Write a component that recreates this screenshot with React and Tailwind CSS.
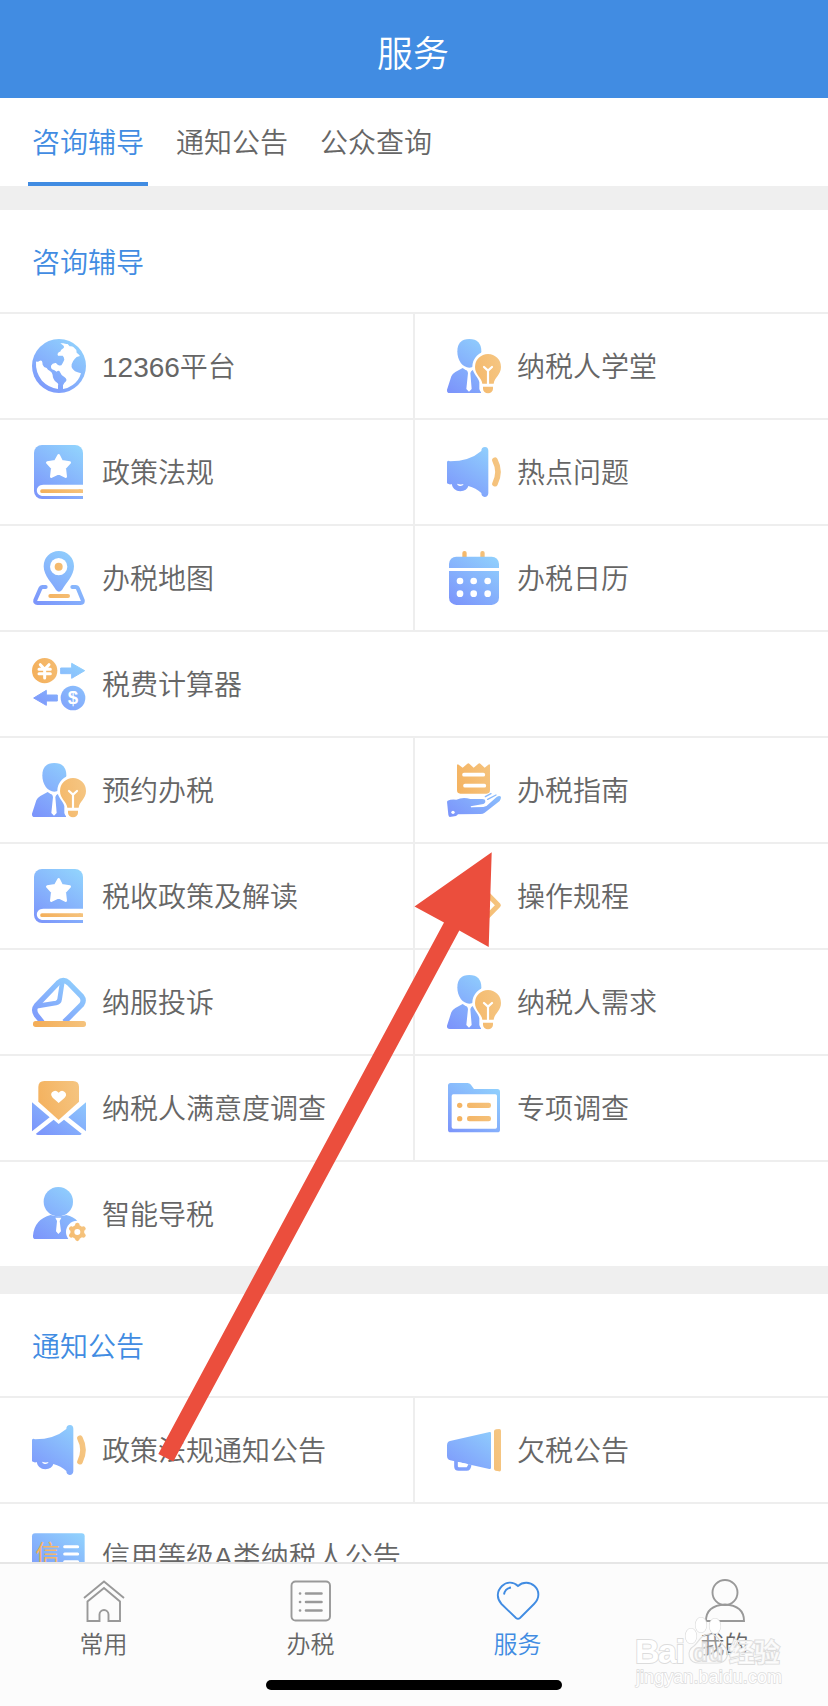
import clsx from "clsx";

const BLUE = "url(#blue)";
const ORANGE = "url(#orange)";

function Globe() {
  return (
    <>
      <circle cx="81" cy="81" r="81" fill={BLUE} />
      <path
        fill="#fff"
        d="M12 69 L15 67 Q18 71 20 67 L24 65 Q31 64 31 70 L32 77 Q35 86 44 87 Q47 93 54 96 Q61 101 62 108 Q62 116 65 120 Q68 128 77 133 Q80 136 78 140 L78 150 Q50 146 30 125 Q10 100 12 69Z"
      />
      <path
        fill="#fff"
        d="M85 13 L94 13 Q101 16 107 15 L113 22 Q120 20 125 25 Q134 31 134 41 Q140 45 144 51 Q132 53 128 60 Q122 66 119 76 Q117 84 122 90 L129 97 Q136 100 147 103 Q141 125 122 138 Q108 148 93 150 L93 139 Q96 132 102 127 Q106 121 98 115 L89 108 Q84 99 82 96 Q78 93 74 98 L66 93 Q56 91 57 80 Q61 71 72 72 Q76 77 80 79 Q88 82 91 74 Q95 66 97 62 Q96 53 92 50 L78 50 Q74 46 80 40 Q87 39 87 33 L94 28 Q99 23 92 18Z"
      />
    </>
  );
}

function Book() {
  return (
    <>
      <path
        fill={BLUE}
        d="M30 0H129A24 24 0 0 1 153 24V162H30A24 24 0 0 1 6 138V24A24 24 0 0 1 30 0Z"
      />
      <path fill="#fff" d="M154 119H34C8 119 8 153 34 153H154Z" />
      <path stroke={ORANGE} strokeWidth="11" strokeLinecap="round" d="M30 138.500L145 138.600" />
      <path fill={ORANGE} d="M140 133H153V144H140Z" />
      <path
        fill="#fff"
        stroke="#fff"
        strokeWidth="8"
        strokeLinejoin="round"
        d="M80 31L89 49L113 53L98 69L101 95L80 84L58 95L61 69L46 53L70 49Z"
      />
    </>
  );
}

function PersonBulb() {
  return (
    <>
      <path
        fill={BLUE}
        d="M67 0C91 0 103 13 103 37C103 65 87 86 67 86C47 86 31 65 31 37C31 13 43 0 67 0Z"
      />
      <path
        fill={BLUE}
        d="M47 87Q67 105 87 87L102 94V162H8Q-1 162 0 152L13 112Q16 104 25 99Z"
      />
      <path fill="#fff" d="M54 88L61 96L63 102L58 150L66 158L74 150L70 102L73 96L83 88Q67 100 54 88Z" />
      <path
        fill="#fff"
        d="M123 36A48 48 0 0 0 76 84C76 102 95 116 97 130V150Q100 162 111 165H162V36Z"
      />
      <path
        fill={ORANGE}
        d="M123 45A39 39 0 0 0 84 84C84 107 104 116 106 134H140C142 116 162 107 162 84A39 39 0 0 0 123 45Z"
      />
      <path fill={ORANGE} d="M108 143H138V149A15 14 0 0 1 108 149Z" />
      <path
        fill="none"
        stroke="#fff"
        strokeWidth="6.500"
        strokeLinecap="round"
        d="M111 84L123 95L135 84M123 95V134"
      />
    </>
  );
}

function Megaphone() {
  return (
    <>
      <path
        fill={BLUE}
        d="M0 50Q4 45 9 49Q67 49 103 18Q103 6 114 6Q124 7 124 17V145Q123 156 113 156Q103 155 103 144Q87 129 64 123Q60 138 40 139Q18 138 14 117Q8 120 0 115Z"
      />
      <path fill="#fff" d="M30 116Q40 120 50 117Q47 124 38 123Q31 122 30 116Z" />
      <path fill="none" stroke={ORANGE} strokeWidth="17" strokeLinecap="round" d="M144 46Q162 80 144 116" />
    </>
  );
}

function MapPin() {
  return (
    <>
      <path
        fill="none"
        stroke={BLUE}
        strokeWidth="12"
        strokeLinecap="round"
        strokeLinejoin="round"
        d="M41 108H32Q27 108 25 113L10 147Q8 156 16 156H146Q155 156 152 147L138 113Q136 108 131 108H121"
      />
      <path
        fill={BLUE}
        d="M80 0A45 45 0 0 1 126 46C126 75 101 97 90 117Q81 127 72 117C61 97 35 75 35 46A45 45 0 0 1 80 0Z"
      />
      <circle cx="80" cy="47" r="26" fill="#fff" />
      <circle cx="80" cy="47" r="12" fill={ORANGE} />
      <rect x="49" y="129" width="65" height="12" rx="6" fill={ORANGE} />
    </>
  );
}

function Exchange() {
  return (
    <>
      <circle cx="38" cy="41" r="38" fill={ORANGE} />
      <circle cx="123" cy="123" r="37" fill={BLUE} />
      <path
        fill={BLUE}
        stroke={BLUE}
        strokeWidth="3"
        strokeLinejoin="round"
        d="M86 33H119V19L158 41L119 64V50H86ZM76 114H43V100L5 123L43 145V132H76Z"
      />
      <path
        fill="none"
        stroke="#fff"
        strokeWidth="9"
        strokeLinecap="round"
        d="M25 23L38 37L51 23M21 37H55M21 50H55M38 37V63"
      />
      <text
        x="123"
        y="142"
        fill="#fff"
        textAnchor="middle"
        className="font-['Liberation_Sans'] text-[56px] font-bold"
      >
        $
      </text>
    </>
  );
}

function Calendar() {
  return (
    <>
      <rect x="46" y="0" width="13" height="24" rx="6" fill={ORANGE} />
      <rect x="100" y="0" width="13" height="24" rx="6" fill={ORANGE} />
      <rect x="6" y="17" width="150" height="145" rx="22" fill={BLUE} />
      <path fill="#fff" d="M5 51H157V60H5Z" />
      {[39, 80, 122].map((x) => (
        <g key={x} fill="#fff">
          <circle cx={x} cy="90" r="10" />
          <circle cx={x} cy="128" r="10" />
        </g>
      ))}
    </>
  );
}

function ReceiptHand() {
  return (
    <>
      <path
        fill={ORANGE}
        d="M30 6Q32 2 35 5L47 14L61 2Q64 -1 67 2L80 14L94 2Q97 -1 100 2L113 14L124 5Q128 2 129 6V82Q129 92 119 92H40Q30 92 30 82Z"
      />
      <path stroke="#fff" strokeWidth="11" strokeLinecap="round" d="M51 35H109M54 68H112" />
      <path
        fill={BLUE}
        d="M2 113Q12 108 28 110Q48 101 70 108H103Q115 107 115 115Q115 123 105 124L71 130Q71 134 76 133L109 132Q118 132 126 122L149 102Q158 96 162 102Q162 109 158 114L113 149Q108 153 101 153L33 154Q30 157 27 159L8 162Q5 161 4 155L0 116Z"
      />
      <path stroke={BLUE} strokeWidth="4" strokeLinecap="round" d="M115 101L132 92M122 109L147 96" />
      <circle cx="18" cy="148" r="5" fill="#fff" />
    </>
  );
}

// the tip is all that shows from under the arrow
function Process() {
  return (
    <path
      fill="none"
      stroke={ORANGE}
      strokeWidth="15"
      strokeLinejoin="round"
      d="M113 67L154 109L113 151L72 109Z"
    />
  );
}

function Envelope() {
  return (
    <>
      <path
        fill="none"
        stroke={BLUE}
        strokeWidth="16"
        strokeLinejoin="round"
        d="M31 142L13 120Q3 104 13 92L78 24Q94 9 110 24L149 64Q158 76 149 89L97 141"
      />
      <path fill="none" stroke={BLUE} strokeWidth="14" strokeLinejoin="round" d="M10 94L72 84Q82 82 83 72L91 20" />
      <rect x="3" y="138" width="159" height="18" rx="8" fill={ORANGE} />
    </>
  );
}

function MailHeart() {
  return (
    <>
      <path fill={ORANGE} d="M37 0H123Q141 0 141 18V62L80 117L19 62V18Q19 0 37 0Z" />
      <path
        fill="#fff"
        d="M80 66L62 50Q54 41 60 34Q70 24 80 35Q90 24 99 34Q106 42 98 50Z"
      />
      <path
        fill={BLUE}
        d="M0 64L53 109L0 151ZM162 64L109 109L162 151ZM65 116L80 129L96 116L149 158Q147 162 143 162H18Q13 162 12 158Z"
      />
    </>
  );
}

function Folder() {
  return (
    <>
      <path
        fill={BLUE}
        d="M11 6H62Q70 6 74 14L81 24H151Q159 24 159 32V146Q159 154 151 154H11Q3 154 3 146V14Q3 6 11 6Z"
      />
      <rect x="14" y="40" width="136" height="103" rx="5" fill="#fff" />
      <circle cx="38" cy="73" r="8" fill={ORANGE} />
      <circle cx="38" cy="113" r="8" fill={ORANGE} />
      <rect x="60" y="65" width="72" height="16" rx="7" fill={ORANGE} />
      <rect x="60" y="105" width="72" height="16" rx="7" fill={ORANGE} />
    </>
  );
}

function PersonGear() {
  return (
    <>
      <circle cx="79" cy="44" r="44" fill={BLUE} />
      <path fill={BLUE} d="M56 84Q79 92 103 84Q125 89 138 104L113 156H11Q2 156 3 146Q7 97 56 84Z" />
      <path fill="#fff" d="M70 92H88L83 102L87 133L79 141L72 133L75 102Z" />
      <circle cx="136" cy="135" r="34" fill="#fff" />
      <circle cx="136" cy="135" r="15" fill="none" stroke={ORANGE} strokeWidth="12" />
      <path
        stroke={ORANGE}
        strokeWidth="14"
        strokeLinecap="round"
        d="M136 115.100L136.100 114M154 125L154.100 124.900M154 145L154.100 145.100M136 155L136.100 155.100M118 145L117.900 145.100M118 125L117.900 124.900"
      />
    </>
  );
}

function Horn() {
  return (
    <>
      <path fill={BLUE} d="M9 54L128 27Q132 26 132 31V134Q132 139 127 138L10 112Q0 109 0 98V68Q0 56 9 54Z" />
      <path fill="none" stroke={BLUE} strokeWidth="11" d="M27 112V130Q27 138 35 138H59Q67 138 68 124" />
      <path fill="#fff" d="M33 117L62 123L61 129H33Z" />
      <path fill={ORANGE} d="M141 25Q141 20 147 19L157 18Q162 18 162 23V140Q162 146 156 145L146 143Q141 142 141 137Z" />
    </>
  );
}

function Credit() {
  return (
    <>
      <rect x="0" y="13" width="158" height="136" rx="9" fill={BLUE} />
      <text
        x="10"
        y="103"
        fill={ORANGE}
        className="font-['Noto_Sans_CJK_SC'] text-[74px] font-normal"
      >
        信
      </text>
      <path stroke="#fff" strokeWidth="9" strokeLinecap="round" d="M98 53H137M98 75H137M98 98H137" />
    </>
  );
}

const guidance = [
  [
    { icon: Globe, label: "12366平台" },
    { icon: PersonBulb, label: "纳税人学堂" },
  ],
  [
    { icon: Book, label: "政策法规" },
    { icon: Megaphone, label: "热点问题" },
  ],
  [
    { icon: MapPin, label: "办税地图" },
    { icon: Calendar, label: "办税日历" },
  ],
  [{ icon: Exchange, label: "税费计算器" }],
  [
    { icon: PersonBulb, label: "预约办税" },
    { icon: ReceiptHand, label: "办税指南" },
  ],
  [
    { icon: Book, label: "税收政策及解读" },
    { icon: Process, label: "操作规程" },
  ],
  [
    { icon: Envelope, label: "纳服投诉" },
    { icon: PersonBulb, label: "纳税人需求" },
  ],
  [
    { icon: MailHeart, label: "纳税人满意度调查" },
    { icon: Folder, label: "专项调查" },
  ],
  [{ icon: PersonGear, label: "智能导税" }],
];

const notices = [
  [
    { icon: Megaphone, label: "政策法规通知公告" },
    { icon: Horn, label: "欠税公告" },
  ],
  [{ icon: Credit, label: "信用等级A类纳税人公告" }],
];

function Section({ title, rows }) {
  return (
    <section className="shrink-0 bg-white">
      <h2 className="flex h-[102px] items-center px-8 pt-1.5 text-[28px] font-[350] text-[#418ce2]">
        {title}
      </h2>
      {rows.map((row) => (
        <div key={row[0].label} className="flex h-[106px] border-t-2 border-[#eeeeee]">
          {row.map(({ icon: Icon, label }, i) => (
            <div
              key={label}
              className={clsx(
                "flex items-center gap-4 pl-8",
                i === 0 ? "min-w-[413px]" : "flex-1 border-l-2 border-[#eeeeee]"
              )}
            >
              <svg viewBox="0 0 162 162" className="size-[54px] shrink-0 overflow-visible">
                <Icon />
              </svg>
              <span className="pt-1 text-[28px] leading-10">{label}</span>
            </div>
          ))}
        </div>
      ))}
    </section>
  );
}

const navItems = [
  {
    label: "常用",
    icon: (
      <path d="M1 18L21 1.500L41 18M4.500 41V21.500L21 8L37 21.500V41H25.500V34.500A4.500 4.500 0 0 0 16.500 34.500V41Z" />
    ),
  },
  {
    label: "办税",
    icon: (
      <>
        <rect x="1.500" y="1.500" width="38.500" height="39" rx="4" />
        <path
          strokeWidth="2.600"
          strokeLinecap="round"
          d="M16 13.500H31.500M16 22H31.500M16 30.500H31.500M10 13.500h.1M10 22h.1M10 30.500h.1"
        />
      </>
    ),
  },
  {
    label: "服务",
    active: true,
    icon: (
      <>
        <path d="M21 6C16 1 9 2 5 6C-.5 11.500-.5 18.500 4.500 24L19 38Q21 39.500 23 38L37 24C43 18 42.500 10.500 37.500 6C33 2 26 1.500 21 6Z" />
        <path d="M7 14.500Q8 8.500 14 7.500" />
      </>
    ),
  },
  {
    label: "我的",
    icon: (
      <>
        <circle cx="21" cy="12.500" r="12.500" />
        <path d="M2 41Q2 25.500 21 24.500Q40 25.500 40 41Z" />
      </>
    ),
  },
];

function BottomNav() {
  return (
    <nav className="h-36 shrink-0 border-t-2 border-[#e6e6e6] bg-[#fcfcfc]">
      <div className="grid h-[116px] grid-cols-4 pt-4">
        {navItems.map(({ label, icon, active }) => (
          <div
            key={label}
            className={clsx("flex flex-col items-center", active ? "text-[#418ce2]" : "text-[#666666]")}
          >
            <svg
              viewBox="0 0 42 44"
              fill="none"
              stroke={active ? "#418ce2" : "#999999"}
              strokeWidth="1.900"
              className="h-11 w-[42px] overflow-visible"
            >
              {icon}
            </svg>
            <span className="mt-[5px] text-2xl leading-8">{label}</span>
          </div>
        ))}
      </div>
      <div className="mx-auto h-2.5 w-[296px] rounded-full bg-black" />
    </nav>
  );
}

function Watermark() {
  return (
    <svg
      viewBox="0 0 160 76"
      fill="#fff"
      stroke="#dcdcdc"
      strokeWidth="1.800"
      paintOrder="stroke"
      className="absolute right-[38px] bottom-[16px] h-[76px] w-[160px]"
    >
      <g strokeWidth="1.200">
        <ellipse cx="61" cy="22" rx="5.500" ry="7.500" />
        <ellipse cx="71" cy="11" rx="5.500" ry="7.500" />
        <ellipse cx="85" cy="12" rx="5.500" ry="7.500" />
        <path
          fillOpacity="0.3"
          d="M80 20C71 20 69 28 64 32C56 37 58 49 69 49H87C98 49 100 38 94 32C89 28 88 20 80 20Z"
        />
      </g>
      <g className="font-['Liberation_Sans'] font-bold">
        <text x="5" y="49" textLength="50" className="text-[34px]">
          Bai
        </text>
        <text x="63" y="47" textLength="30" fillOpacity="0.35" className="text-[24px]">
          du
        </text>
      </g>
      <text
        x="99"
        y="48"
        textLength="51"
        fillOpacity="0.8"
        className="font-['Noto_Sans_CJK_SC'] text-[26px] font-bold"
      >
        经验
      </text>
      <text
        x="6"
        y="69"
        textLength="146"
        strokeWidth="1.400"
        className="font-['Liberation_Sans'] text-[18px] font-normal"
      >
        jingyan.baidu.com
      </text>
    </svg>
  );
}

export default function App() {
  return (
    <div className="relative flex h-[1706px] w-[828px] flex-col overflow-hidden bg-[#efefef] font-['Liberation_Sans','Noto_Sans_CJK_SC',sans-serif] font-[350] text-[#666666]">
      <svg className="absolute size-0">
        <defs>
          <linearGradient id="blue" gradientUnits="userSpaceOnUse" x1="20" y1="162" x2="130" y2="0">
            <stop offset="0" stopColor="#7c95fb" />
            <stop offset="1" stopColor="#91d2fd" />
          </linearGradient>
          <linearGradient id="orange" gradientUnits="userSpaceOnUse" x1="0" y1="100" x2="162" y2="60">
            <stop offset="0" stopColor="#f4ae58" />
            <stop offset="1" stopColor="#f5c683" />
          </linearGradient>
        </defs>
      </svg>

      <header className="flex h-[98px] shrink-0 items-center justify-center bg-[#418ce2] pt-3 pr-0.5 text-[36px] text-white">
        服务
      </header>

      <div className="flex h-[88px] shrink-0 gap-6 bg-white px-7 text-[28px]">
        <div className="flex w-[120px] items-center justify-center border-b-4 border-[#418ce2] pt-2 text-[#418ce2]">
          咨询辅导
        </div>
        <div className="flex w-[120px] items-center justify-center pt-1">通知公告</div>
        <div className="flex w-[120px] items-center justify-center pt-1">公众查询</div>
      </div>

      <main className="flex min-h-0 flex-1 flex-col gap-7 overflow-hidden pt-6">
        <Section title="咨询辅导" rows={guidance} />
        <Section title="通知公告" rows={notices} />
      </main>

      <BottomNav />

      <svg viewBox="0 0 828 1706" className="pointer-events-none absolute inset-0 size-full">
        <path
          fill="#eb4e3d"
          d="M491.700 852.300L414.500 906.500L444 922.500L158.300 1454L173.300 1461.500L459.300 930.500L488.700 947Z"
        />
      </svg>
      <Watermark />
    </div>
  );
}
